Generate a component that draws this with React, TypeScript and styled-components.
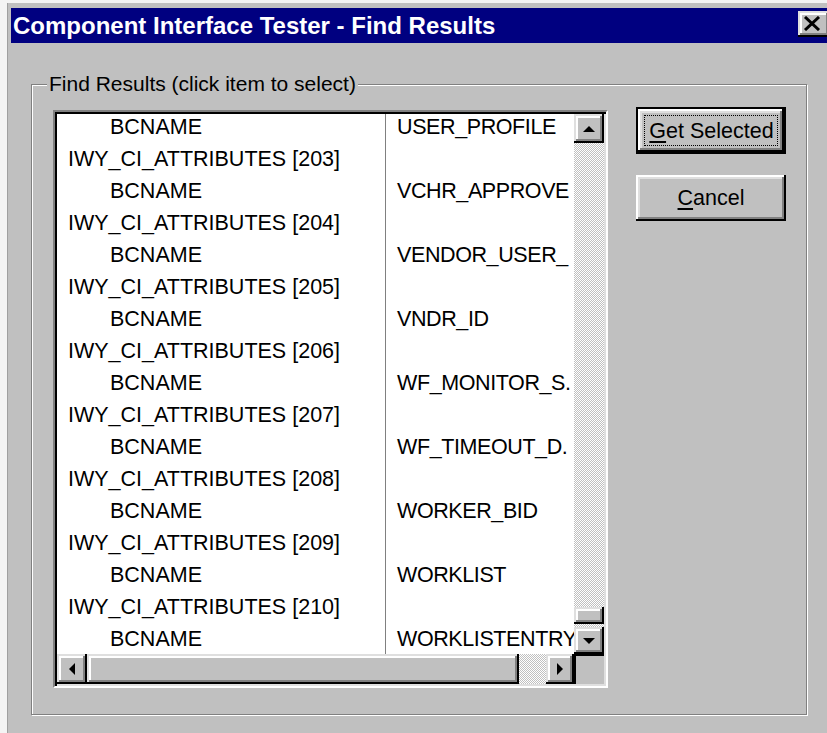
import React from "react";
import styled, { createGlobalStyle } from "styled-components";

const Global = createGlobalStyle`
  html, body { margin: 0; padding: 0; background: #f4f4f4; }
  body {
    width: 827px;
    height: 733px;
    overflow: hidden;
    font-family: "Liberation Sans", Arial, sans-serif;
    color: #000;
  }
  * { box-sizing: border-box; }
`;

const raised = `
  background: #c0c0c0;
  box-shadow:
    inset -2px -2px 0 #000,
    inset 2px 2px 0 #dfdfdf,
    inset -4px -4px 0 #808080,
    inset 4px 4px 0 #fff;
`;

const Window = styled.div`
  margin: 3px 0 0 7px;
  height: 730px;
  background: #c0c0c0;
  border-left: 1px solid #a0a0a0;
  padding: 5px 0 0 3px;
  display: flex;
  flex-direction: column;
`;

const TitleBar = styled.div`
  height: 35px;
  background: #000080;
  color: #fff;
  display: flex;
  justify-content: space-between;
  overflow: hidden;
  padding-left: 2px;
`;

const TitleText = styled.div`
  font-weight: bold;
  font-size: 24px;
  line-height: 35px;
  white-space: nowrap;
`;

const CloseButton = styled.div`
  ${raised}
  width: 32px;
  height: 26px;
  margin-top: 3px;
  margin-right: -3px;
  flex-shrink: 0;
  display: flex;
  align-items: center;
  justify-content: center;
  padding: 0 4px 2px 0;
`;

const Body = styled.div`
  flex: 1;
  padding: 41px 20px 18px 20px;
  display: flex;
`;

const GroupBox = styled.div`
  position: relative;
  flex: 1;
  border: 1px solid #808080;
  box-shadow: 1px 1px 0 #fff, inset 1px 1px 0 #fff;
  padding: 22px 0 0 21px;
  display: flex;
  align-items: flex-start;
`;

const GroupLabel = styled.div`
  position: absolute;
  top: -12px;
  left: 15px;
  padding: 0 2px;
  background: #c0c0c0;
  font-size: 21px;
  line-height: 22px;
  white-space: nowrap;
`;

const ListBox = styled.div`
  margin-top: 3px;
  width: 555px;
  height: 578px;
  border-style: solid;
  border-width: 2px;
  border-color: #808080 #fff #fff #808080;
  box-shadow: inset 2px 2px 0 #000, inset -2px -2px 0 #dfdfdf;
  padding: 2px;
  display: grid;
  grid-template-columns: 1fr 30px;
  grid-template-rows: 1fr 30px;
  background: #fff;
`;

const Rows = styled.div`
  overflow: hidden;
  background: #fff;
`;

const RowsInner = styled.div`
  margin-top: -3px;
  display: grid;
  grid-template-columns: 328px 1fr;
  grid-auto-rows: 32px;
  font-size: 21.5px;
  line-height: 32px;
  white-space: nowrap;
`;

const Cell = styled.div<{ $indent?: boolean }>`
  padding-left: ${(p) => (p.$indent ? "53px" : "11px")};
  overflow: hidden;
`;

const ValueCell = styled.div`
  border-left: 1px solid #808080;
  padding-left: 11px;
  letter-spacing: -0.4px;
  overflow: hidden;
`;

const stipple = `
  background-color: #fff;
  background-image: repeating-conic-gradient(#c0c0c0 0 25%, #fff 0 50%);
  background-size: 2px 2px;
`;

const VScroll = styled.div`
  display: flex;
  flex-direction: column;
  ${stipple}
`;

const HScroll = styled.div`
  display: flex;
  ${stipple}
`;

const ArrowButton = styled.div<{ $w?: number; $h?: number }>`
  ${raised}
  flex-shrink: 0;
  width: ${(p) => (p.$w ? `${p.$w}px` : "auto")};
  height: ${(p) => (p.$h ? `${p.$h}px` : "auto")};
  display: flex;
  align-items: center;
  justify-content: center;
`;

const Thumb = styled.div<{ $w?: number; $h?: number }>`
  ${raised}
  flex-shrink: 0;
  width: ${(p) => (p.$w ? `${p.$w}px` : "auto")};
  height: ${(p) => (p.$h ? `${p.$h}px` : "auto")};
`;

const Track = styled.div<{ $size?: number }>`
  flex: ${(p) => (p.$size ? `0 0 ${p.$size}px` : "1")};
`;

const Corner = styled.div`
  background: #c0c0c0;
  border-top: 2px solid #000;
  border-left: 2px solid #000;
`;

const ButtonColumn = styled.div`
  margin-left: 28px;
  display: flex;
  flex-direction: column;
  gap: 21px;
`;

const PushButton = styled.div<{ $default?: boolean }>`
  width: 150px;
  height: ${(p) => (p.$default ? "47px" : "46px")};
  font-size: 21.5px;
  display: flex;
  align-items: center;
  justify-content: center;
  background: #c0c0c0;
  border: ${(p) => (p.$default ? "2px solid #000" : "none")};
  box-shadow:
    inset -2px -2px 0 #000,
    inset 2px 2px 0 #fff,
    inset -4px -4px 0 #808080,
    inset 4px 4px 0 #dfdfdf;
`;

const FocusRing = styled.span`
  outline: 1px dotted #000;
  outline-offset: 0;
  padding: 3px 3px 2px 4px;
  line-height: 24px;
`;

const Label = styled.span`
  line-height: 24px;
`;

const Accel = styled.span`
  text-decoration: underline;
  text-underline-offset: 3px;
`;

const Arrow = ({ dir }: { dir: "up" | "down" | "left" | "right" }) => {
  const pts = {
    up: "0,6 6,0 12,6",
    down: "0,0 12,0 6,6",
    left: "6,0 6,12 0,6",
    right: "0,0 0,12 6,6",
  }[dir];
  const vertical = dir === "up" || dir === "down";
  return (
    <svg width={vertical ? 12 : 6} height={vertical ? 6 : 12} viewBox={vertical ? "0 0 12 6" : "0 0 6 12"}>
      <polygon points={pts} fill="#000" />
    </svg>
  );
};

const CloseGlyph = () => (
  <svg width="18" height="15" viewBox="0 0 18 15">
    <path d="M2 1 L16 14 M16 1 L2 14" stroke="#000" strokeWidth="3" />
  </svg>
);

const entries = [
  { attr: 203, value: "USER_PROFILE" },
  { attr: 204, value: "VCHR_APPROVE" },
  { attr: 205, value: "VENDOR_USER_" },
  { attr: 206, value: "VNDR_ID" },
  { attr: 207, value: "WF_MONITOR_S." },
  { attr: 208, value: "WF_TIMEOUT_D." },
  { attr: 209, value: "WORKER_BID" },
  { attr: 210, value: "WORKLIST" },
  { attr: null, value: "WORKLISTENTRY" },
];

export default function App() {
  return (
    <>
      <Global />
      <Window>
        <TitleBar>
          <TitleText>Component Interface Tester - Find Results</TitleText>
          <CloseButton>
            <CloseGlyph />
          </CloseButton>
        </TitleBar>
        <Body>
          <GroupBox>
            <GroupLabel>Find Results (click item to select)</GroupLabel>
            <ListBox>
              <Rows>
                <RowsInner>
                  {entries.map((e, i) => (
                    <React.Fragment key={i}>
                      <Cell $indent>BCNAME</Cell>
                      <ValueCell>{e.value}</ValueCell>
                      {e.attr !== null && (
                        <>
                          <Cell>IWY_CI_ATTRIBUTES [{e.attr}]</Cell>
                          <ValueCell />
                        </>
                      )}
                    </React.Fragment>
                  ))}
                </RowsInner>
              </Rows>
              <VScroll>
                <ArrowButton $h={29}>
                  <Arrow dir="up" />
                </ArrowButton>
                <Track />
                <Thumb $h={17} />
                <Track $size={3} />
                <ArrowButton $h={27}>
                  <Arrow dir="down" />
                </ArrowButton>
              </VScroll>
              <HScroll>
                <ArrowButton $w={30}>
                  <Arrow dir="left" />
                </ArrowButton>
                <Thumb $w={432} />
                <Track />
                <ArrowButton $w={28}>
                  <Arrow dir="right" />
                </ArrowButton>
              </HScroll>
              <Corner />
            </ListBox>
            <ButtonColumn>
              <PushButton $default>
                <FocusRing>
                  <Accel>G</Accel>et Selected
                </FocusRing>
              </PushButton>
              <PushButton>
                <Label>
                  <Accel>C</Accel>ancel
                </Label>
              </PushButton>
            </ButtonColumn>
          </GroupBox>
        </Body>
      </Window>
    </>
  );
}
